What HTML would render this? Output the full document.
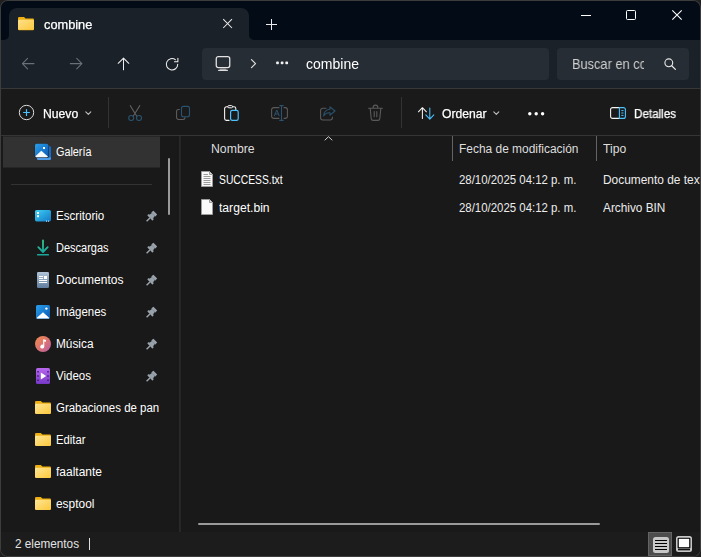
<!DOCTYPE html>
<html lang="es">
<head>
<meta charset="utf-8">
<title>combine</title>
<style>
*{box-sizing:border-box;margin:0;padding:0}
html,body{width:701px;height:557px;overflow:hidden;background:#1f1f1f}
body{font-family:"Liberation Sans",sans-serif;font-size:12px;color:#fff;position:relative}
.abs{position:absolute}
#win{position:absolute;left:0;top:0;width:701px;height:557px;border-radius:8px;background:#3d3d3d;overflow:hidden}
#inner{position:absolute;left:1px;top:1px;width:699px;height:555px;border-radius:7px;background:#191919;overflow:hidden}
/* everything inside #inner is offset by -1,-1 via wrapper */
#c{position:absolute;left:-1px;top:-1px;width:701px;height:557px}
#title{left:0;top:0;width:701px;height:40px;background:#030b17}
#tab{left:9px;top:8px;width:240px;height:32px;background:#1a2129;border-radius:8px 8px 0 0}
#navbar{left:0;top:40px;width:701px;height:48px;background:#1a2129}
#navline{left:0;top:88px;width:701px;height:1px;background:#383838}
#toolbar{left:0;top:89px;width:701px;height:46px;background:#1a1a1a}
#toolline{left:0;top:135px;width:701px;height:1px;background:#353535}
#navpane{left:0;top:136px;width:179px;height:396px;background:#191919}
#vdiv{left:179px;top:136px;width:2px;height:396px;background:linear-gradient(90deg,#2a2a2a,#252525)}
#status{left:0;top:532px;width:701px;height:25px;background:#1c1c1c}
.t{position:absolute;white-space:nowrap;line-height:16px;height:16px;transform-origin:0 50%}
.b{-webkit-text-stroke:0.25px #fff}
.g{will-change:transform}
.addr{background:#262d34;border-radius:4px}
.sel{background:#2d2d2d;border-radius:3px}
svg{position:absolute;overflow:visible}
</style>
</head>
<body>
<div id="win"><div id="inner"><div id="c">

<div id="title" class="abs"></div>
<div id="tab" class="abs"></div>
<!-- tab outer curves -->
<svg style="left:4px;top:35px" width="5" height="5"><path d="M5 5H0A5 5 0 0 0 5 0Z" fill="#1a2129"/></svg>
<svg style="left:249px;top:35px" width="5" height="5"><path d="M0 5H5A5 5 0 0 1 0 0Z" fill="#1a2129"/></svg>
<div id="navbar" class="abs"></div>
<div id="navline" class="abs"></div>
<div id="toolbar" class="abs"></div>
<div id="toolline" class="abs"></div>
<div id="navpane" class="abs"></div>
<div id="vdiv" class="abs"></div>
<div id="status" class="abs"></div>

<!-- TAB -->
<svg style="left:18px;top:17px" width="16" height="13.3" viewBox="0 0 16 14" preserveAspectRatio="none">
  <defs><linearGradient id="fg" x1="0" y1="0" x2="1" y2="1"><stop offset="0" stop-color="#ffe08a"/><stop offset="1" stop-color="#fbc93f"/></linearGradient></defs>
  <path d="M1.2 0H6l1.6 1.6H14.8A1.2 1.2 0 0 1 16 2.8V12.8A1.2 1.2 0 0 1 14.8 14H1.2A1.2 1.2 0 0 1 0 12.8V1.2A1.2 1.2 0 0 1 1.2 0Z" fill="#eeb011"/>
  <path d="M0 4.2A1.2 1.2 0 0 1 1.2 3H14.8A1.2 1.2 0 0 1 16 4.2V12.3A1.2 1.2 0 0 1 14.8 13.5H1.2A1.2 1.2 0 0 1 0 12.3Z" fill="url(#fg)"/>
</svg>
<div class="t b g" style="left:44px;top:17px;font-size:12.5px;transform:scaleX(1.0222)" id="tabtxt">combine</div>
<svg style="left:223px;top:19px" width="9" height="9" viewBox="0 0 9 9"><path d="M0.2 0.2L9 9M9 0.2L0.2 9" stroke="#ececec" stroke-width="1.05" fill="none"/></svg>
<svg style="left:266px;top:19px" width="11" height="11" viewBox="0 0 11 11"><rect x="0" y="5" width="11" height="1" fill="#ececec"/><rect x="5" y="0" width="1" height="11" fill="#ececec"/></svg>

<!-- WINDOW CONTROLS -->
<svg style="left:581px;top:15px" width="10" height="1"><rect width="10" height="1" fill="#fff"/></svg>
<svg style="left:626px;top:10px" width="10" height="10" viewBox="0 0 10 10"><rect x="0.5" y="0.5" width="9" height="9" rx="1" fill="none" stroke="#fff" stroke-width="1"/></svg>
<svg style="left:672px;top:10px" width="10" height="10" viewBox="0 0 10 10"><path d="M0.3 0.3L9.7 9.7M9.7 0.3L0.3 9.7" stroke="#fff" stroke-width="1.1" fill="none"/></svg>

<!-- NAV BUTTONS -->
<svg style="left:22px;top:57px" width="13" height="13" viewBox="0 0 13 13"><path d="M12 6.6H0.6M5.6 1.3L0.4 6.6L5.6 11.9" stroke="#6b7078" stroke-width="1.05" fill="none" stroke-linecap="round" stroke-linejoin="round"/></svg>
<svg style="left:70px;top:57px" width="13" height="13" viewBox="0 0 13 13"><path d="M0.3 6.6H11.7M6.7 1.3L11.9 6.6L6.7 11.9" stroke="#6b7078" stroke-width="1.05" fill="none" stroke-linecap="round" stroke-linejoin="round"/></svg>
<svg style="left:117px;top:57px" width="13" height="14" viewBox="0 0 13 14"><path d="M6.5 12.8V1.3M1.2 6.3L6.5 1.1L11.8 6.3" stroke="#f0f0f0" stroke-width="1.05" fill="none" stroke-linecap="round" stroke-linejoin="round"/></svg>
<svg style="left:165px;top:57px" width="15" height="15" viewBox="0 0 15 15"><g transform="translate(0.3,0.3)"><path d="M12.4 7A5.7 5.7 0 1 1 10.2 2.5" stroke="#f0f0f0" stroke-width="1.05" fill="none" stroke-linecap="round"/><path d="M12.6 1V4.4H9.2" stroke="#f0f0f0" stroke-width="1.05" fill="none" stroke-linecap="round" stroke-linejoin="round"/></g></svg>

<!-- ADDRESS -->
<div class="abs addr" style="left:202px;top:48px;width:347px;height:32px"></div>
<svg style="left:215px;top:55px" width="16" height="16" viewBox="0 0 16 16"><rect x="1.25" y="1.65" width="13.5" height="11" rx="2.1" fill="none" stroke="#e2e2e2" stroke-width="1.3"/><path d="M5.4 13.4H10.6L11.6 14.9H4.4Z" fill="#8e9196"/><path d="M3.6 15.4H12.4" stroke="#dcdcdc" stroke-width="1.1" fill="none" stroke-linecap="round"/></svg>
<svg style="left:251px;top:59px" width="6" height="10" viewBox="0 0 6 10"><path d="M0.5 0.7L4.5 4.7L0.5 8.7" stroke="#e0e0e0" stroke-width="1.2" fill="none" stroke-linecap="round" stroke-linejoin="round"/></svg>
<svg style="left:276px;top:61px" width="13" height="4" viewBox="0 0 13 4"><rect x="0.1" y="0.6" width="2.8" height="2.6" rx="0.9" fill="#f2f2f2"/><rect x="4.7" y="0.6" width="2.8" height="2.6" rx="0.9" fill="#f2f2f2"/><rect x="9.3" y="0.6" width="2.8" height="2.6" rx="0.9" fill="#f2f2f2"/></svg>
<div class="t g" style="left:306px;top:56px;font-size:14px;transform:scaleX(1.0015)" id="addrtxt">combine</div>

<!-- SEARCH -->
<div class="abs addr" style="left:557px;top:48px;width:132px;height:32px"></div>
<div class="t g" style="left:572px;top:56px;font-size:14px;color:#cfcfcf;width:78.8px;overflow:hidden;transform:scaleX(0.9143)" id="srchtxt">Buscar en combine</div>
<svg style="left:664px;top:58px" width="13" height="13" viewBox="0 0 13 13"><circle cx="4.8" cy="4.8" r="3.9" fill="none" stroke="#e6e6e6" stroke-width="1.15"/><path d="M7.7 7.7L11.4 11.4" stroke="#e6e6e6" stroke-width="1.25" stroke-linecap="round"/></svg>

<!-- TOOLBAR -->
<svg style="left:18px;top:104px" width="17" height="17" viewBox="0 0 17 17"><circle cx="8.5" cy="8.5" r="7.2" fill="none" stroke="#dcdcdc" stroke-width="1"/><path d="M8.5 5.6V11.4M5.6 8.5H11.4" stroke="#4cc2ff" stroke-width="1.2" stroke-linecap="round"/></svg>
<div class="t b g" style="left:43px;top:106px;transform:scaleX(1.0148)" id="nuevo">Nuevo</div>
<svg style="left:85px;top:111px" width="7" height="5" viewBox="0 0 7 5"><path d="M0.8 0.9L3.3 3.4L5.8 0.9" stroke="#c4c4c4" stroke-width="1.05" fill="none" stroke-linecap="round" stroke-linejoin="round"/></svg>
<div class="abs" style="left:108px;top:97px;width:1px;height:31px;background:#333"></div>
<!-- cut -->
<svg style="left:128px;top:105px" width="15" height="16" viewBox="0 0 15 16"><path d="M2.2 0.6L8.8 11.2M11.8 0.6L5.2 11.2" stroke="#606060" stroke-width="1.05" fill="none" stroke-linecap="round"/><circle cx="3.2" cy="13" r="2.5" fill="none" stroke="#29536f" stroke-width="1.1"/><circle cx="11" cy="13" r="2.5" fill="none" stroke="#29536f" stroke-width="1.1"/></svg>
<!-- copy -->
<svg style="left:176px;top:105px" width="15" height="15" viewBox="0 0 15 15"><path d="M3.4 4.4H2.6A2 2 0 0 0 0.6 6.4V12.4A2 2 0 0 0 2.6 14.4H7A2 2 0 0 0 9 12.4" fill="none" stroke="#5e5e5e" stroke-width="1.05" stroke-linecap="round"/><rect x="5.5" y="1.4" width="8" height="10.4" rx="2" fill="none" stroke="#29536f" stroke-width="1.1"/></svg>
<!-- paste -->
<svg style="left:224px;top:105px" width="15" height="16" viewBox="0 0 15 16"><path d="M5 15.4H2.4A1.8 1.8 0 0 1 0.6 13.6V3.6A1.8 1.8 0 0 1 2.4 1.8H3.6M8.8 1.8H10A1.8 1.8 0 0 1 11.8 3.6V4.4" fill="none" stroke="#f2f2f2" stroke-width="1.1" stroke-linecap="round"/><rect x="3.8" y="0.6" width="4.8" height="2.2" rx="1.1" fill="none" stroke="#f2f2f2" stroke-width="1"/><rect x="6.6" y="5.4" width="7.6" height="10" rx="1.6" fill="none" stroke="#4cc2ff" stroke-width="1.2"/></svg>
<!-- rename -->
<svg style="left:271px;top:105px" width="17" height="16" viewBox="0 0 17 16"><path d="M8.4 2.6H2.8A2.2 2.2 0 0 0 0.6 4.8V11.2A2.2 2.2 0 0 0 2.8 13.4H8.4M12.6 2.6H14.2A2.2 2.2 0 0 1 16.4 4.8V11.2A2.2 2.2 0 0 1 14.2 13.4H12.6" fill="none" stroke="#5a5a5a" stroke-width="1.1"/><path d="M8.8 0.6H12.2M8.8 15.4H12.2M10.5 0.6V15.4" stroke="#29536f" stroke-width="1.1" fill="none" stroke-linecap="round"/><path d="M3.4 10.8L5.8 5L8.2 10.8M4.2 9H7.4" stroke="#29536f" stroke-width="1" fill="none" stroke-linecap="round" stroke-linejoin="round"/></svg>
<!-- share -->
<svg style="left:320px;top:106px" width="16" height="15" viewBox="0 0 16 15"><path d="M6 2.2H2.8A2.2 2.2 0 0 0 0.6 4.4V11.8A2.2 2.2 0 0 0 2.8 14H10.2A2.2 2.2 0 0 0 12.4 11.8V11" fill="none" stroke="#5a5a5a" stroke-width="1.1" stroke-linecap="round"/><path d="M10 0.8L15 5L10 9.2V6.8C6.8 6.6 4.8 7.8 3.6 10C3.8 6.4 6 3.6 10 3.2Z" fill="none" stroke="#29536f" stroke-width="1.1" stroke-linejoin="round"/></svg>
<!-- trash -->
<svg style="left:368px;top:105px" width="15" height="16" viewBox="0 0 15 16"><path d="M0.6 3.2H14.4M5.2 3V2.4A2.3 2.3 0 0 1 9.8 2.4V3M2.2 3.4L3.2 13.6A2 2 0 0 0 5.2 15.4H9.8A2 2 0 0 0 11.8 13.6L12.8 3.4M6.2 6.6V11.8M8.8 6.6V11.8" fill="none" stroke="#5a5a5a" stroke-width="1.1" stroke-linecap="round"/></svg>
<div class="abs" style="left:401px;top:97px;width:1px;height:31px;background:#333"></div>
<!-- sort -->
<svg style="left:418px;top:107px" width="17" height="13" viewBox="0 0 17 13"><path d="M4.4 11.4V0.9M0.4 4.8L4.4 0.7L8.4 4.8" stroke="#f2f2f2" stroke-width="1.05" fill="none" stroke-linecap="round" stroke-linejoin="round"/><path d="M11.8 1V12M7.8 7.9L11.8 12.1L15.8 7.9" stroke="#4cc2ff" stroke-width="1.05" fill="none" stroke-linecap="round" stroke-linejoin="round"/></svg>
<div class="t b g" style="left:442px;top:106px;transform:scaleX(1.0106)" id="ordenar">Ordenar</div>
<svg style="left:493px;top:111px" width="7" height="5" viewBox="0 0 7 5"><path d="M0.8 0.9L3.3 3.4L5.8 0.9" stroke="#c4c4c4" stroke-width="1.05" fill="none" stroke-linecap="round" stroke-linejoin="round"/></svg>
<svg style="left:528px;top:112px" width="17" height="4" viewBox="0 0 17 4"><circle cx="1.8" cy="1.8" r="1.7" fill="#fff"/><circle cx="8.2" cy="1.8" r="1.7" fill="#fff"/><circle cx="14.6" cy="1.8" r="1.7" fill="#fff"/></svg>
<!-- details pane -->
<svg style="left:610px;top:107px" width="16" height="12" viewBox="0 0 16 12"><path d="M9.4 0.6H2.6A2 2 0 0 0 0.6 2.6V9.4A2 2 0 0 0 2.6 11.4H9.4" fill="none" stroke="#f2f2f2" stroke-width="1.1"/><path d="M9.4 0.6H13.4A2 2 0 0 1 15.4 2.6V9.4A2 2 0 0 1 13.4 11.4H9.4Z" fill="none" stroke="#4cc2ff" stroke-width="1.1"/><path d="M11.3 3.6H13.5M11.3 6H13.5M11.3 8.4H13.5" stroke="#4cc2ff" stroke-width="1" /></svg>
<div class="t b g" style="left:634px;top:106px;transform:scaleX(0.9710)" id="detalles">Detalles</div>

<!-- NAV PANE -->
<div class="abs" style="left:3px;top:136px;width:157px;height:32px;background:#262626"></div><div class="abs" style="left:3px;top:137px;width:157px;height:30px;background:#323232"></div>
<div class="abs" style="left:11px;top:184px;width:141px;height:1px;background:#333"></div>
<div class="abs" style="left:168px;top:158px;width:2px;height:57px;background:#9a9a9a;border-radius:1px"></div>

<svg width="0" height="0" style="left:0;top:0"><defs>
<linearGradient id="gFold" x1="0" y1="0" x2="1" y2="1"><stop offset="0" stop-color="#ffe596"/><stop offset="1" stop-color="#fbc83a"/></linearGradient>
<linearGradient id="gPic" x1="0" y1="0" x2="1" y2="1"><stop offset="0" stop-color="#2aa0ee"/><stop offset="1" stop-color="#0a58b0"/></linearGradient>
<linearGradient id="gDesk" x1="0" y1="0" x2="1" y2="1"><stop offset="0" stop-color="#3fd0f6"/><stop offset="1" stop-color="#1278c4"/></linearGradient>
<linearGradient id="gDown" x1="0" y1="0" x2="0" y2="1"><stop offset="0" stop-color="#35c98a"/><stop offset="1" stop-color="#18a79c"/></linearGradient>
<linearGradient id="gDoc" x1="0" y1="0" x2="0" y2="1"><stop offset="0" stop-color="#b2c4d6"/><stop offset="1" stop-color="#5f7d9e"/></linearGradient>
<linearGradient id="gMus" x1="0" y1="0" x2="1" y2="1"><stop offset="0" stop-color="#f08c4c"/><stop offset="0.5" stop-color="#dc7470"/><stop offset="1" stop-color="#b95aa8"/></linearGradient>
<linearGradient id="gVid" x1="0" y1="0" x2="0" y2="1"><stop offset="0" stop-color="#b868ee"/><stop offset="1" stop-color="#7637c6"/></linearGradient>
</defs></svg>

<!-- Galeria -->
<svg style="left:35px;top:144px" width="16" height="16" viewBox="0 0 16 16"><rect x="2" y="2" width="14" height="14" rx="1.6" fill="#0f6ccc"/><path d="M2 13.6H16V14.4A1.6 1.6 0 0 1 14.4 16H3.6A1.6 1.6 0 0 1 2 14.4Z" fill="#4c9ae8"/><rect x="-0.5" y="-0.6" width="14.5" height="14.6" rx="1.9" fill="#2b2624"/><rect x="0" y="-0.2" width="13.4" height="13.5" rx="1.5" fill="url(#gPic)"/><path d="M0.4 12.3L6.3 6.8L12.9 12.4A1.5 1.5 0 0 1 11.9 13.3H1.5A1.5 1.5 0 0 1 0.4 12.3Z" fill="#f4faff"/><rect x="8" y="3" width="2" height="2" fill="#fff"/></svg>
<div class="t nv" style="left:56px;top:144px;transform:scaleX(0.9019)" id="n0">Galería</div>

<!-- Escritorio -->
<svg style="left:35px;top:210px" width="16" height="12" viewBox="0 0 16 12"><rect x="0" y="0" width="16" height="11.4" rx="1.6" fill="url(#gDesk)"/><rect x="2" y="2" width="2" height="2" fill="#fff"/><rect x="2" y="5.2" width="2" height="2" fill="#fff"/><rect x="11" y="10.6" width="1" height="1" fill="#e8f4ff"/><rect x="13" y="10.6" width="1" height="1" fill="#e8f4ff"/></svg>
<div class="t nv" style="left:56px;top:208px;transform:scaleX(0.9657)" id="n1">Escritorio</div>

<!-- Descargas -->
<svg style="left:37px;top:240px" width="12" height="16" viewBox="0 0 12 16"><path d="M6 0.5V11.5M1.3 7.2L6 12L10.7 7.2" stroke="url(#gDown)" stroke-width="1.8" fill="none" stroke-linecap="round" stroke-linejoin="round"/><rect x="0" y="14" width="12" height="1.6" rx="0.6" fill="#19a89b"/></svg>
<div class="t nv" style="left:56px;top:240px;transform:scaleX(0.9170)" id="n2">Descargas</div>

<!-- Documentos -->
<svg style="left:37px;top:272px" width="12" height="16" viewBox="0 0 12 16"><rect x="0" y="0" width="12" height="16" rx="1.3" fill="url(#gDoc)"/><path d="M2 4.5H6M2 6.5H6M2 8.5H10M2 10.5H10" stroke="#fff" stroke-width="1"/><rect x="7" y="4" width="3" height="3" fill="#fff"/></svg>
<div class="t nv" style="left:56px;top:272px;transform:scaleX(1.0019)" id="n3">Documentos</div>

<!-- Imagenes -->
<svg style="left:36px;top:305px" width="14" height="14" viewBox="0 0 14 14"><rect x="0" y="0" width="14" height="14" rx="1.6" fill="url(#gPic)"/><path d="M0.6 13L7 7.2L13.4 13A1.6 1.6 0 0 1 12.4 13.6H1.6A1.6 1.6 0 0 1 0.6 13Z" fill="#fff"/><circle cx="10.4" cy="3.6" r="1.2" fill="#fff"/></svg>
<div class="t nv" style="left:56px;top:304px;transform:scaleX(0.9544)" id="n4">Imágenes</div>

<!-- Musica -->
<svg style="left:35px;top:336px" width="16" height="16" viewBox="0 0 16 16"><circle cx="8" cy="8" r="8" fill="url(#gMus)"/><path d="M8.2 3.2L11 3.9V5.8L9.3 5.4V10.6A2 2 0 1 1 8.2 8.8Z" fill="#fff"/></svg>
<div class="t nv" style="left:56px;top:336px;transform:scaleX(0.9864)" id="n5">Música</div>

<!-- Videos -->
<svg style="left:36px;top:368px" width="14" height="16" viewBox="0 0 14 16"><rect x="0" y="0" width="14" height="16" rx="1.6" fill="url(#gVid)"/><path d="M4.8 4.6L10.2 8L4.8 11.4Z" fill="#fff"/><g fill="#3a1a6a"><rect x="1.2" y="3" width="1.6" height="1.6" rx="0.4"/><rect x="1.2" y="7.2" width="1.6" height="1.6" rx="0.4"/><rect x="1.2" y="11.4" width="1.6" height="1.6" rx="0.4"/><rect x="11.2" y="3" width="1.6" height="1.6" rx="0.4"/><rect x="11.2" y="7.2" width="1.6" height="1.6" rx="0.4"/><rect x="11.2" y="11.4" width="1.6" height="1.6" rx="0.4"/></g></svg>
<div class="t nv" style="left:56px;top:368px;transform:scaleX(0.9593)" id="n6">Videos</div>

<!-- folders -->
<svg style="left:35px;top:401px" width="16" height="13.4" viewBox="0 0 16 14" preserveAspectRatio="none"><path d="M1.2 0H5.8L7.4 1.6H14.8A1.2 1.2 0 0 1 16 2.8V12.3A1.2 1.2 0 0 1 14.8 13.5H1.2A1.2 1.2 0 0 1 0 12.3V1.2A1.2 1.2 0 0 1 1.2 0Z" fill="#eeb011"/><path d="M0 4.2A1.2 1.2 0 0 1 1.2 3H14.8A1.2 1.2 0 0 1 16 4.2V12.3A1.2 1.2 0 0 1 14.8 13.5H1.2A1.2 1.2 0 0 1 0 12.3Z" fill="url(#gFold)"/></svg>
<div class="t nv" style="left:56px;top:400px;width:108.3px;overflow:hidden;transform:scaleX(0.9549)" id="n7">Grabaciones de pantalla</div>

<svg style="left:35px;top:433px" width="16" height="13.4" viewBox="0 0 16 14" preserveAspectRatio="none"><path d="M1.2 0H5.8L7.4 1.6H14.8A1.2 1.2 0 0 1 16 2.8V12.3A1.2 1.2 0 0 1 14.8 13.5H1.2A1.2 1.2 0 0 1 0 12.3V1.2A1.2 1.2 0 0 1 1.2 0Z" fill="#eeb011"/><path d="M0 4.2A1.2 1.2 0 0 1 1.2 3H14.8A1.2 1.2 0 0 1 16 4.2V12.3A1.2 1.2 0 0 1 14.8 13.5H1.2A1.2 1.2 0 0 1 0 12.3Z" fill="url(#gFold)"/></svg>
<div class="t nv" style="left:56px;top:432px;transform:scaleX(0.9407)" id="n8">Editar</div>

<svg style="left:35px;top:465px" width="16" height="13.4" viewBox="0 0 16 14" preserveAspectRatio="none"><path d="M1.2 0H5.8L7.4 1.6H14.8A1.2 1.2 0 0 1 16 2.8V12.3A1.2 1.2 0 0 1 14.8 13.5H1.2A1.2 1.2 0 0 1 0 12.3V1.2A1.2 1.2 0 0 1 1.2 0Z" fill="#eeb011"/><path d="M0 4.2A1.2 1.2 0 0 1 1.2 3H14.8A1.2 1.2 0 0 1 16 4.2V12.3A1.2 1.2 0 0 1 14.8 13.5H1.2A1.2 1.2 0 0 1 0 12.3Z" fill="url(#gFold)"/></svg>
<div class="t nv" style="left:56px;top:464px;transform:scaleX(0.9990)" id="n9">faaltante</div>

<svg style="left:35px;top:497px" width="16" height="13.4" viewBox="0 0 16 14" preserveAspectRatio="none"><path d="M1.2 0H5.8L7.4 1.6H14.8A1.2 1.2 0 0 1 16 2.8V12.3A1.2 1.2 0 0 1 14.8 13.5H1.2A1.2 1.2 0 0 1 0 12.3V1.2A1.2 1.2 0 0 1 1.2 0Z" fill="#eeb011"/><path d="M0 4.2A1.2 1.2 0 0 1 1.2 3H14.8A1.2 1.2 0 0 1 16 4.2V12.3A1.2 1.2 0 0 1 14.8 13.5H1.2A1.2 1.2 0 0 1 0 12.3Z" fill="url(#gFold)"/></svg>
<div class="t nv" style="left:56px;top:496px;transform:scaleX(0.9922)" id="n10">esptool</div>

<!-- pins -->
<svg class="pin" style="left:146px;top:210px" width="12" height="12" viewBox="0 0 12 12"><g transform="translate(4.95,6.9) rotate(45)" fill="#98a2aa"><rect x="-2.8" y="-6.2" width="5.6" height="3" rx="0.5"/><path d="M-2 -3.4H2L2.6 0H-2.6Z"/><rect x="-3.7" y="-0.5" width="7.4" height="2.1" rx="0.6"/><rect x="-0.75" y="1.4" width="1.5" height="4.8" rx="0.4"/></g></svg>
<svg class="pin" style="left:146px;top:242px" width="12" height="12" viewBox="0 0 12 12"><g transform="translate(4.95,6.9) rotate(45)" fill="#98a2aa"><rect x="-2.8" y="-6.2" width="5.6" height="3" rx="0.5"/><path d="M-2 -3.4H2L2.6 0H-2.6Z"/><rect x="-3.7" y="-0.5" width="7.4" height="2.1" rx="0.6"/><rect x="-0.75" y="1.4" width="1.5" height="4.8" rx="0.4"/></g></svg>
<svg class="pin" style="left:146px;top:274px" width="12" height="12" viewBox="0 0 12 12"><g transform="translate(4.95,6.9) rotate(45)" fill="#98a2aa"><rect x="-2.8" y="-6.2" width="5.6" height="3" rx="0.5"/><path d="M-2 -3.4H2L2.6 0H-2.6Z"/><rect x="-3.7" y="-0.5" width="7.4" height="2.1" rx="0.6"/><rect x="-0.75" y="1.4" width="1.5" height="4.8" rx="0.4"/></g></svg>
<svg class="pin" style="left:146px;top:306px" width="12" height="12" viewBox="0 0 12 12"><g transform="translate(4.95,6.9) rotate(45)" fill="#98a2aa"><rect x="-2.8" y="-6.2" width="5.6" height="3" rx="0.5"/><path d="M-2 -3.4H2L2.6 0H-2.6Z"/><rect x="-3.7" y="-0.5" width="7.4" height="2.1" rx="0.6"/><rect x="-0.75" y="1.4" width="1.5" height="4.8" rx="0.4"/></g></svg>
<svg class="pin" style="left:146px;top:338px" width="12" height="12" viewBox="0 0 12 12"><g transform="translate(4.95,6.9) rotate(45)" fill="#98a2aa"><rect x="-2.8" y="-6.2" width="5.6" height="3" rx="0.5"/><path d="M-2 -3.4H2L2.6 0H-2.6Z"/><rect x="-3.7" y="-0.5" width="7.4" height="2.1" rx="0.6"/><rect x="-0.75" y="1.4" width="1.5" height="4.8" rx="0.4"/></g></svg>
<svg class="pin" style="left:146px;top:370px" width="12" height="12" viewBox="0 0 12 12"><g transform="translate(4.95,6.9) rotate(45)" fill="#98a2aa"><rect x="-2.8" y="-6.2" width="5.6" height="3" rx="0.5"/><path d="M-2 -3.4H2L2.6 0H-2.6Z"/><rect x="-3.7" y="-0.5" width="7.4" height="2.1" rx="0.6"/><rect x="-0.75" y="1.4" width="1.5" height="4.8" rx="0.4"/></g></svg>


<!-- FILE LIST -->
<svg style="left:324px;top:136px" width="9" height="5" viewBox="0 0 9 5"><path d="M0.7 4.3L4.5 0.7L8.3 4.3" stroke="#cfcfcf" stroke-width="1" fill="none"/></svg>
<div class="t" style="left:211px;top:141px;color:#dedede;transform:scaleX(1.0214)" id="h1">Nombre</div>
<div class="abs" style="left:452px;top:136px;width:1px;height:25px;background:#636363"></div>
<div class="t" style="left:459px;top:141px;color:#dedede;transform:scaleX(0.9952)" id="h2">Fecha de modificación</div>
<div class="abs" style="left:596px;top:136px;width:1px;height:25px;background:#636363"></div>
<div class="t" style="left:603px;top:141px;color:#dedede;transform:scaleX(1.0128)" id="h3">Tipo</div>

<!-- file icons -->
<svg style="left:201px;top:171px" width="13" height="16" viewBox="0 0 13 16"><path d="M0.5 0.5H8.5L11.5 3.5V15.5H0.5Z" fill="#f8f8f8" stroke="#9c9c9c" stroke-width="1"/><path d="M8.5 0.5V3.5H11.5" fill="#d8d8d8" stroke="#9c9c9c" stroke-width="1"/><path d="M2.5 5.5H9.5M2.5 7.5H9.5M2.5 9.5H9.5M2.5 11.5H9.5M2.5 13.5H9.5M2.5 3.5H7" stroke="#9a9a9a" stroke-width="1"/></svg>
<div class="t" style="left:219px;top:172px;transform:scaleX(0.8593)" id="f1">SUCCESS.txt</div>
<div class="t" style="left:459px;top:172px;color:#ececec;transform:scaleX(0.9511)" id="d1">28/10/2025 04:12 p. m.</div>
<div class="t" style="left:603px;top:172px;color:#ececec;transform:scaleX(0.9919)" id="t1">Documento de texto</div>

<svg style="left:201px;top:199px" width="13" height="16" viewBox="0 0 13 16"><path d="M0.5 0.5H8.5L11.5 3.5V15.5H0.5Z" fill="#fbfbfb" stroke="#9c9c9c" stroke-width="1"/><path d="M8.5 0.5V3.5H11.5" fill="#d8d8d8" stroke="#9c9c9c" stroke-width="1"/></svg>
<div class="t" style="left:219px;top:200px;transform:scaleX(1.0111)" id="f2">target.bin</div>
<div class="t" style="left:459px;top:200px;color:#ececec;transform:scaleX(0.9511)" id="d2">28/10/2025 04:12 p. m.</div>
<div class="t" style="left:603px;top:200px;color:#ececec;transform:scaleX(0.9849)" id="t2">Archivo BIN</div>

<div class="abs" style="left:198px;top:523px;width:402px;height:2px;background:#9a9a9a;border-radius:1px"></div>

<!-- STATUS -->
<div class="t" style="left:15px;top:536px;color:#e4e4e4;transform:scaleX(0.9790)" id="st">2 elementos</div>
<div class="abs" style="left:89px;top:538px;width:1px;height:12px;background:#e0e0e0"></div>
<div class="abs" style="left:648px;top:532px;width:24px;height:24px;background:#4d4d4d;border:1px solid #646464"></div>
<svg style="left:653px;top:537px" width="16" height="16" viewBox="0 0 16 16"><rect x="0" y="0" width="16" height="16" rx="2.5" fill="#c8c8c8"/><path d="M2 3.5H14M2 6.5H14M2 9.5H14M2 12.5H14" stroke="#000" stroke-width="1"/></svg>
<svg style="left:676px;top:536px" width="16" height="16" viewBox="0 0 16 16"><rect x="0" y="0" width="16" height="16" rx="2.5" fill="#c8c8c8"/><rect x="1.6" y="1.7" width="12.8" height="10.7" rx="1" fill="#000"/><rect x="2.8" y="2.8" width="10.4" height="8.4" fill="#fff"/><rect x="2" y="13.1" width="12" height="1.2" fill="#000"/></svg>

</div></div></div>
</body>
</html>
